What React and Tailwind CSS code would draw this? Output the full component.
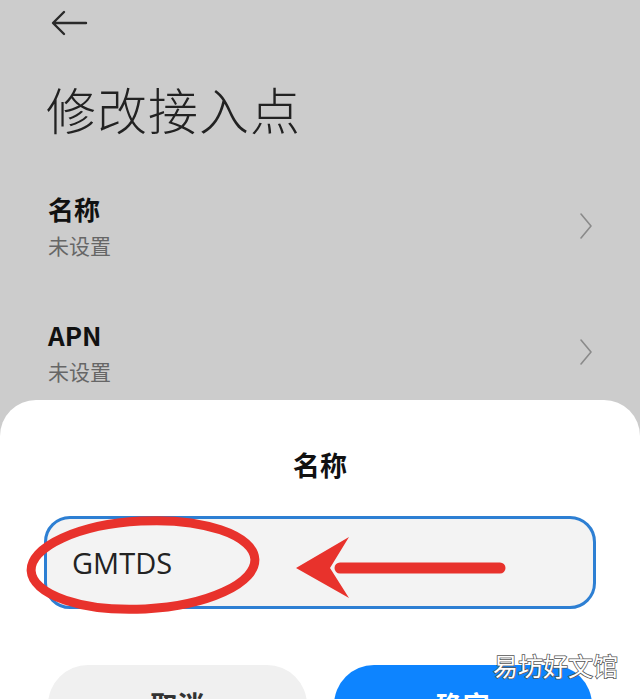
import React from "react";

const cjk = { fontFamily: '"Noto Sans CJK SC", "Noto Sans", sans-serif' };

const Chevron = () => (
  <svg width="16" height="28" viewBox="0 0 16 28" fill="none">
    <path d="M3 2 L13 14 L3 26" stroke="#8a8a8a" strokeWidth="1.6" strokeLinecap="round" strokeLinejoin="round" />
  </svg>
);

const SettingRow = ({ title, value, className }) => (
  <div className={`flex items-center justify-between pl-[48px] pr-[46px] ${className}`}>
    <div className="flex flex-col">
      <span className="text-[26px] leading-[34px] font-bold text-[#111]">{title}</span>
      <span className="text-[21px] leading-[30px] text-[#666] mt-[4px]">{value}</span>
    </div>
    <Chevron />
  </div>
);

const App = () => {
  return (
    <div className="relative w-[640px] h-[699px] overflow-hidden bg-[#cccccc] flex flex-col" style={cjk}>
      <div className="pl-[50px] pt-[9px] h-[30px]">
        <svg width="38" height="28" viewBox="0 0 38 28" fill="none">
          <path d="M36 14 H4 M14 3 L3 14 L14 25" stroke="#2a2a2a" strokeWidth="2.4" strokeLinecap="round" strokeLinejoin="round" />
        </svg>
      </div>
      <h1 className="pl-[46px] mt-[48px] text-[50px] leading-[60px] font-light text-[#222] tracking-[1px]">修改接入点</h1>
      <SettingRow title="名称" value="未设置" className="mt-[54px]" />
      <SettingRow title="APN" value="未设置" className="mt-[58px]" />

      <div className="mt-[14px] flex-1 bg-white rounded-t-[36px] flex flex-col items-center">
        <h2 className="mt-[47px] text-[27px] leading-[36px] font-bold text-[#111]">名称</h2>
        <div className="relative mt-[33px] w-[552px] h-[93px] rounded-[26px] border-[3px] border-[#2d7fd3] bg-[#f3f3f3] flex items-center pl-[25px]">
          <span className="text-[29px] font-medium text-[#222]" style={{ fontFamily: '"Open Sans", "Noto Sans", sans-serif' }}>GMTDS</span>
        </div>
        <div className="mt-[56px] w-[544px] flex gap-[27px]">
          <div className="flex-1 h-[100px] rounded-[40px] bg-[#f0f0f0] flex justify-center pt-[20px]">
            <span className="text-[27px] font-bold text-[#333]">取消</span>
          </div>
          <div className="flex-1 h-[100px] rounded-[40px] bg-[#0d84ff] flex justify-center pt-[20px]">
            <span className="text-[27px] font-bold text-white">确定</span>
          </div>
        </div>
      </div>

      <svg className="absolute left-0 top-0 pointer-events-none" width="640" height="699" viewBox="0 0 640 699" fill="none">
        <ellipse cx="143" cy="565" rx="112" ry="44" transform="rotate(-3 143 565)" stroke="#e8322c" strokeWidth="9" />
        <path d="M500 568 H340" stroke="#e8322c" strokeWidth="11" strokeLinecap="round" />
        <path d="M296 568 L349 537 L330 568 L349 598 Z" fill="#e8322c" />
      </svg>

      <span
        className="absolute left-[493px] top-[649px] text-[25px] leading-[32px] text-white"
        style={{ WebkitTextStroke: "1.5px #555", paintOrder: "stroke fill" }}
      >
        易坊好文馆
      </span>
    </div>
  );
};

export default App;
